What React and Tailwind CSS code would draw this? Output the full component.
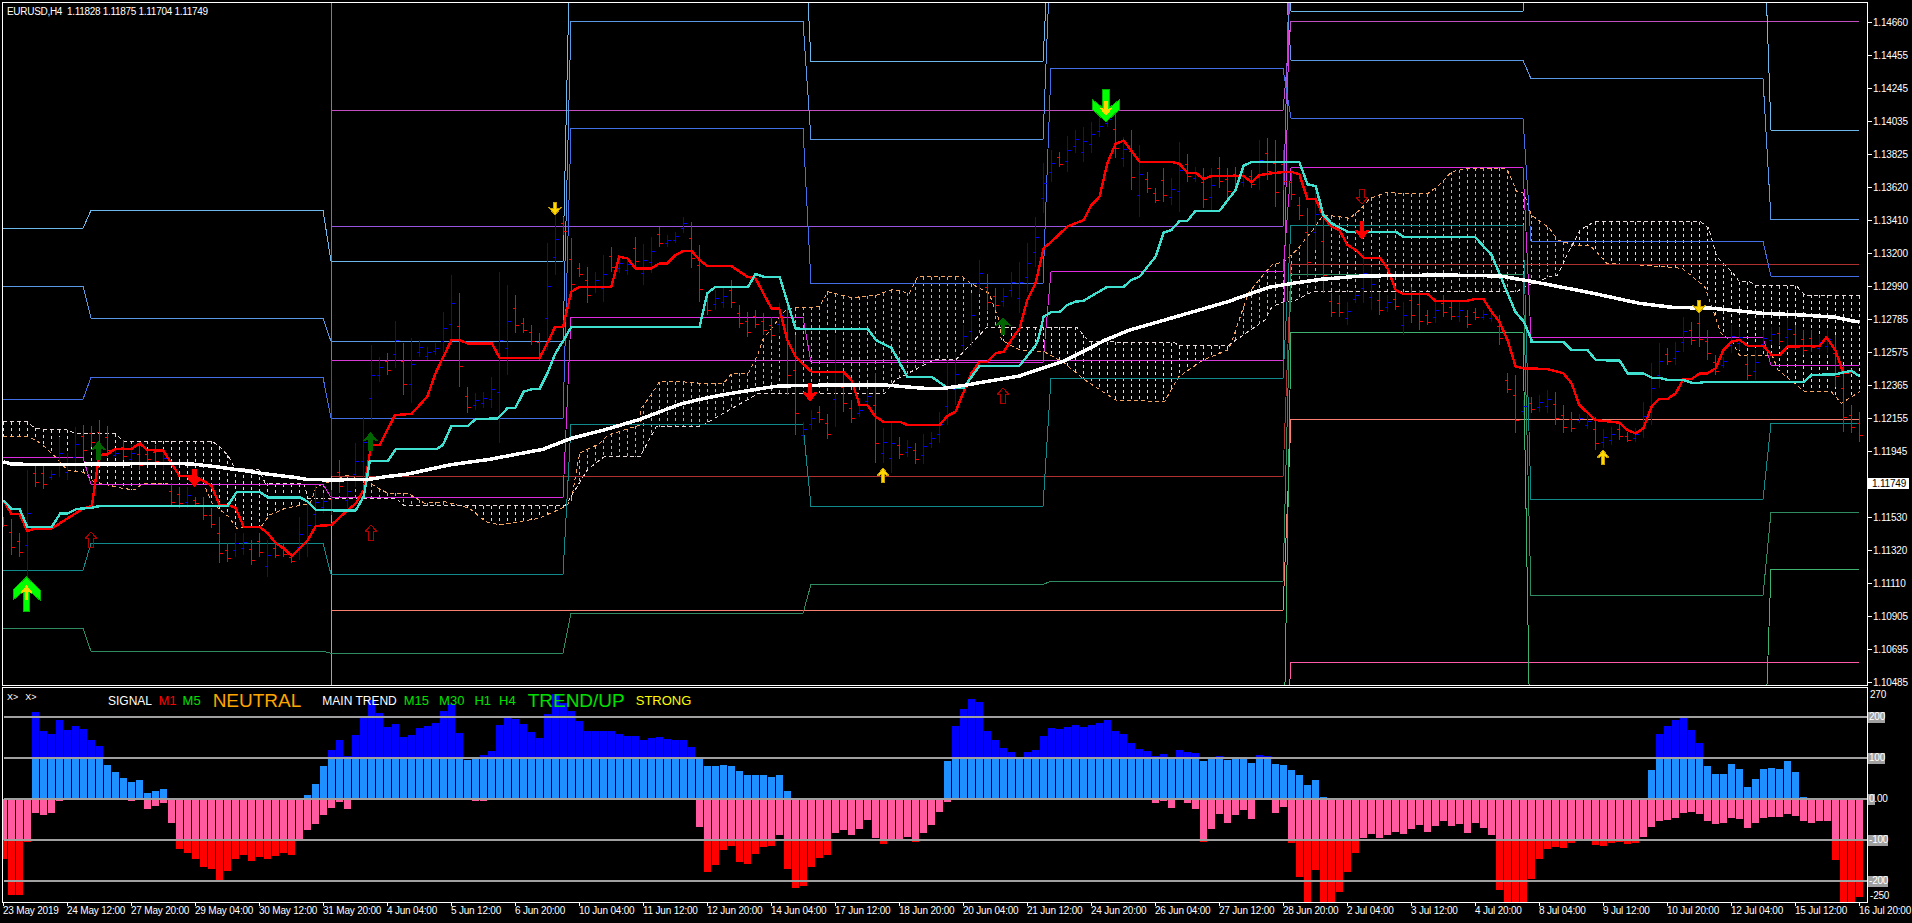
import React from "react";

// zoom crop coords -> page coords
const z = (x0, y0, a) => {
  const out = [];
  for (let i = 0; i < a.length; i += 2) out.push([x0 + a[i] / 2.45, y0 + a[i + 1] / 3]);
  return out;
};
const pts = (p) => p.map((q) => q[0].toFixed(1) + "," + q[1].toFixed(1)).join(" ");

const interp = (p, x) => {
  if (x <= p[0][0]) return p[0][1];
  for (let i = 1; i < p.length; i++) {
    if (x <= p[i][0]) {
      const t = (x - p[i - 1][0]) / (p[i][0] - p[i - 1][0] || 1);
      return p[i - 1][1] + t * (p[i][1] - p[i - 1][1]);
    }
  }
  return p[p.length - 1][1];
};

const RED = [
  ...z(0, 340, [8,480,28,522,48,522,67,573,87,565,127,565,205,505,225,498,233,430,243,345,263,343,283,327,322,327,342,310,361,330,400,332,420,370,440,408,480,410,518,437,538,495,558,495,577,503,597,560,636,560,656,580,676,610,695,625,715,648,754,600,774,558,812,555,852,510,872,490,891,450,906,340,910,315,930,315,968,225,1008,222,1047,170,1067,100,1106,0,1126,0,1145,10,1205,10,1224,53,1322,53,1345,0]),
  ...z(0, 0, [1360,980,1380,980,1385,950,1400,875,1420,860,1498,860,1517,770,1537,775,1557,805]),
  ...z(640, 0, [0,805,28,805,48,790,67,790,87,765,107,752,126,752,146,780,165,798,224,798,244,815,263,830,283,835,322,925,341,925,361,1020]),
  ...z(640, 340, [381,50,420,95,498,95,518,120,538,195,557,195,577,230,596,245,636,245,655,255,734,255,753,228,773,215,812,100,832,65,851,65,871,40,891,35,910,0]),
  ...z(640, 0, [930,985,949,900,969,850,989,745,1008,725,1047,680,1087,660,1106,615,1126,590,1145,490,1165,432,1185,422,1224,485,1302,485,1322,492,1341,518,1361,518,1381,537,1400,528,1479,528,1498,547,1518,525,1548,520]),
  ...z(1272, 0, [28,516,48,516,67,522,87,597,107,597,126,650,146,680,165,690,185,735,205,750,224,773,264,773,283,805,303,870,322,882,381,882,400,902,479,902,498,897,518,897,538,935,557,965,577,1020]),
  ...z(1272, 340, [597,80,617,85,675,87,714,100,734,130,753,195,792,240,851,248,871,270,891,280,910,265,930,200,949,177,969,177,989,160,1008,117,1028,117,1048,100,1067,100,1087,85,1106,30,1126,5,1146,0,1165,17,1204,17,1224,45,1244,45,1263,20,1342,17,1358,-8,1380,30,1400,100,1420,95,1438,105]),
];

const CYAN = [
  ...z(0, 340, [8,480,28,507,48,507,67,560,127,560,148,520,167,520,187,507,225,503,245,498,558,497,580,456,636,456,656,472,735,472,754,485,774,510,871,512,891,470,906,363,950,363,970,327,1070,327,1085,315,1106,258,1146,258,1165,238,1220,235,1243,205,1263,203,1283,155,1302,148,1322,146,1341,100,1361,40,1381,0]),
  ...z(0, 0, [1400,980,1568,980]),
  ...z(640, 0, [146,980,165,880,185,860,265,860,283,822,303,830,342,830,381,985,400,987,558,987,578,1020]),
  ...z(640, 340, [617,25,655,110,714,110,753,143,793,143,832,77,930,77,970,15,975,0]),
  ...z(640, 0, [989,950,1008,936,1028,936,1047,915,1067,905,1087,902,1145,860,1185,860,1204,840,1224,830,1263,770,1283,698,1302,690,1322,663,1341,663,1361,632,1420,632,1459,570,1479,497,1498,486,1548,486]),
  ...z(1272, 0, [67,486,87,553,107,558,126,645,146,670,185,695,303,695,322,710,498,712,538,765,596,935,617,965,636,1020]),
  ...z(1272, 340, [636,5,714,5,734,30,773,30,793,60,852,62,871,100,910,100,930,113,949,113,969,120,1008,120,1028,128,1048,128,1067,125,1304,125,1322,105,1380,103,1420,92,1438,108]),
];

const WHITE = [
  ...z(0, 340, [8,365,28,372,108,374,420,370,470,372,515,378,600,392,640,400,720,412,750,418,810,420,905,418,945,410,1000,402,1100,375,1200,358,1330,328,1400,295,1480,270,1568,238]),
  ...z(640, 340, [60,210,100,192,140,180,200,165,300,145,340,138,470,135,600,135,665,142,710,146,745,145,800,135,860,122,930,108,960,95,1040,62,1080,38,1140,0]),
  ...z(640, 0, [1200,990,1300,955,1440,905,1540,862]),
  ...z(1272, 0, [50,850,120,838,220,828,420,825,560,828,640,845,780,878,900,910,980,922,1080,925,1200,940,1300,945,1380,952,1438,966]),
];

const SPAN_A = [
  ...z(0, 340, [8,290,70,290,100,310,135,350,165,390,205,397,230,425,300,445,330,450,350,430,500,435,520,490,560,530,580,565,640,560,660,525,700,505,760,490,775,440,850,405,895,420,920,440,950,460,1000,460,1040,490,1090,485,1150,505,1190,545,1225,555,1320,535,1385,500,1400,480,1420,340,1470,310,1490,285,1568,255]),
  ...z(640, 340, [0,210,30,160,47,125,100,125,150,130,205,130,225,100,265,100,290,40]),
  ...z(640, 0, [300,1020,360,925,440,920,460,875,520,893,580,885,620,868,660,880,680,830,790,830,810,850,855,880,880,960,885,1020]),
  ...z(640, 340, [930,30,990,35,1040,70,1090,120,1165,180,1285,185,1320,110,1380,60,1440,30,1450,5]),
  ...z(640, 0, [1490,880,1530,820]),
  ...z(1272, 0, [0,795,30,785,60,750,100,690,125,645,165,650,190,655,215,630,240,595,280,578,320,580,380,582,410,555,440,515,480,505,575,505,600,575,618,580,635,645,680,685,700,720,740,735,780,738,795,755,820,790,900,795,1005,805,1060,860,1100,1000]),
  ...z(1272, 340, [1130,10,1145,45,1225,45,1240,90,1305,155,1370,155,1395,190,1440,155]),
];

const SPAN_B = [
  ...z(0, 340, [8,245,68,245,85,265,105,268,165,270,185,280,285,282,300,303,520,303,545,328,560,350,575,385,635,390,650,430,745,432,755,475,970,475,990,497,1385,497,1440,388,1480,350,1568,350]),
  ...z(640, 340, [40,260,150,258,290,160,600,160,625,120,720,60,775,58]),
  ...z(640, 0, [850,982,1070,982,1090,1010]),
  ...z(640, 340, [1100,5,1310,8,1320,17,1440,17]),
  [1265, 320],
  ...z(1272, 0, [0,920,30,905,50,905,100,875,600,875,618,860,680,830,700,825,725,760,755,690,790,665,1050,665,1070,685,1090,770,1130,820,1145,845,1170,845,1185,855,1285,858,1305,885,1440,888]),
];

// weekly pivot steps
const SEGS = [[3,83],[91,323],[331,563],[571,803],[811,1043],[1051,1283],[1291,1523],[1531,1763],[1771,1859]];
const WEEKLY = [
  { c: "#6cb8ea", y: [228.3,210.3,261.3,-100,61.3,-100,11.3,-100,130.3] },
  { c: "#5b9ae2", y: [286.3,318.3,341.3,21.3,139.3,-60,60.3,78.7,219.3] },
  { c: "#4270e4", y: [399.3,377.3,418.3,128.3,283.3,68.3,118.3,241.3,276.3] },
  { c: "#e02ce0", y: [457.3,484.3,497.3,317.3,362.3,271.7,167.7,337.3,365] },
  { c: "#108a8a", y: [570.3,543.3,574.3,424.7,506.3,378.3,225.3,499.3,423.3] },
  { c: "#2e8b62", y: [628.3,651.3,653.3,613.3,584.3,581.3,274.3,595.3,512.3] },
  { c: "#3cb371", y: [800,800,800,800,800,800,332.3,800,569.3] },
];
// longer monthly levels
const MONTHLY = [
  { c: "#c050c0", p: [[331,-100],[331,110.3],[1283,110.3],[1291,21.3],[1859,21.3]] },
  { c: "#9a55e0", p: [[331,110.3],[331,226.3],[1283,226.3],[1291,-100]] },
  { c: "#d83cd8", p: [[331,226.3],[331,360.3],[1283,360.3],[1291,-100]] },
  { c: "#b03030", p: [[331,360.3],[331,476.3],[1283,476.3],[1291,264.3],[1859,264.3]] },
  { c: "#fa8072", p: [[331,476.3],[331,800],[331,610.3],[1283,610.3],[1291,419.3],[1859,419.3]] },
  { c: "#ff5aa8", p: [[1283,800],[1291,662.3],[1859,662.3]] },
];

// [red, high, low] one per H4 bar, 8px apart
const BARS = [
  [1,517,527],[1,519,555],[1,533,557],[0,470,577],[1,465,487],[1,465,489],[0,470,480],[0,437,477],[0,453,480],[0,427,470],
  [1,425,457],[1,426,447],[1,420,453],[1,426,457],[0,450,457],[1,440,460],[0,445,465],[1,445,470],[1,450,462],[1,445,465],
  [0,450,470],[1,483,507],[1,487,508],[0,487,508],[1,497,505],[1,497,520],[1,508,528],[1,517,563],[1,543,562],[0,533,557],
  [0,533,555],[1,540,565],[1,533,557],[0,540,577],[1,543,558],[1,543,557],[1,553,563],[0,517,560],[0,503,557],[0,485,527],
  [0,493,513],[1,490,515],[1,460,493],[0,480,508],[0,443,487],[0,417,480],[0,345,420],[0,357,382],[1,353,375],[0,321,368],
  [1,343,395],[0,338,403],[0,340,357],[0,347,360],[0,343,355],[0,312,353],[0,275,345],[1,293,387],[1,387,413],[0,393,410],
  [0,392,408],[0,377,408],[0,272,443],[0,285,375],[1,295,333],[1,318,333],[1,325,345],[1,333,360],[0,243,350],[0,215,275],
  [1,217,235],[1,238,297],[1,263,277],[1,267,303],[0,272,293],[0,255,302],[1,247,272],[0,257,273],[0,257,275],[1,237,268],
  [0,244,285],[0,237,273],[1,227,247],[0,235,247],[0,232,243],[0,217,233],[1,222,268],[1,245,302],[1,293,315],[0,290,310],
  [0,288,308],[1,280,308],[1,305,328],[1,312,337],[1,310,328],[1,313,335],[1,317,340],[0,303,333],[1,305,395],[1,335,435],
  [0,422,440],[0,410,430],[1,406,423],[1,414,439],[0,335,427],[1,373,412],[1,400,423],[0,405,417],[0,390,405],[1,373,463],
  [0,428,463],[0,423,473],[1,437,459],[0,440,457],[1,443,464],[0,434,464],[0,432,448],[0,412,443],[0,360,425],[0,353,405],
  [0,325,353],[0,293,347],[0,260,293],[1,274,310],[1,288,310],[0,288,307],[0,272,297],[0,262,313],[0,243,292],[0,217,267],
  [0,163,213],[0,150,182],[1,152,167],[0,136,172],[0,130,153],[0,127,162],[0,122,153],[0,118,137],[0,113,127],[1,113,158],
  [0,137,167],[1,130,190],[0,145,217],[1,172,193],[1,188,203],[1,168,202],[0,178,205],[0,142,212],[1,154,182],[0,167,182],
  [1,168,208],[0,168,210],[1,157,188],[1,168,198],[1,167,187],[0,170,187],[1,170,188],[0,140,190],[1,138,180],[1,140,207],
  [1,150,190],[1,173,200],[1,197,220],[1,208,277],[0,190,250],[1,213,293],[1,293,317],[1,295,317],[0,302,325],[0,290,303],
  [0,253,303],[0,267,310],[1,292,315],[0,295,312],[1,293,310],[0,302,335],[1,287,323],[1,290,330],[1,310,325],[0,302,323],
  [1,295,317],[1,300,320],[0,302,322],[1,310,328],[1,308,320],[0,310,320],[0,308,322],[1,315,345],[1,373,393],[1,375,433],
  [0,400,415],[1,397,413],[0,395,412],[0,390,413],[1,392,425],[1,405,433],[1,412,432],[0,414,423],[0,415,429],[1,417,450],
  [0,429,448],[0,427,445],[1,423,440],[1,432,442],[0,428,442],[0,402,438],[0,363,425],[0,343,388],[1,348,365],[0,342,365],
  [0,317,352],[1,322,345],[1,310,347],[1,330,360],[1,355,375],[0,357,368],[0,325,353],[0,328,350],[1,355,380],[0,350,380],
  [0,330,350],[0,327,345],[1,327,345],[0,318,345],[1,325,350],[1,330,355],[1,330,352],[0,335,353],[0,330,353],[1,335,387],
  [1,365,432],[1,405,433],[1,412,442],
];

const rep = (n) => Array(n).fill(357);
const TOPS = [
  ...rep(4),96,153,162,120,150,138,147,180,198,255,276,294,306,300,339,333,327,
  ...rep(17),345,312,258,210,180,228,165,111,60,99,141,132,171,165,144,138,129,93,72,159,240,234,225,213,135,114,117,132,156,174,102,42,69,93,123,153,153,153,153,162,168,168,
  180,174,171,177,180,180,201,237,258,258,255,258,273,285,285,285,291,285,333,
  ...rep(19),243,138,87,57,66,153,180,204,216,237,216,210,168,144,147,141,135,141,135,129,120,153,162,189,207,213,228,222,237,210,216,219,243,234,228,240,234,234,249,225,228,252,
  255,270,285,315,300,351,
  ...rep(40),270,162,138,120,114,150,189,258,282,282,252,267,321,297,267,264,267,243,276,351,
  ...rep(7),
];
const BOTS = [
  537,645,645,485,399,405,399,363,...rep(8),363,357,387,378,369,
  429,507,519,537,561,567,600,573,537,525,543,531,537,528,519,525,480,
  450,432,405,384,366,387,...rep(15),363,363,...rep(26),
  441,576,555,510,498,546,552,522,501,498,465,567,
  624,618,561,534,525,459,450,465,447,420,474,492,477,477,471,486,459,435,396,
  366,...rep(25),369,363,384,357,369,387,486,447,402,429,405,390,417,357,357,
  399,381,489,591,666,570,666,666,636,576,519,474,462,474,465,456,462,447,435,456,438,423,438,432,459,429,444,465,
  630,666,666,666,597,537,507,501,504,489,480,480,495,498,489,486,492,489,471,
  441,423,420,414,399,396,402,423,432,429,414,417,444,429,414,411,411,402,408,423,
  429,423,423,540,666,666,651,
];

const PRICES = ["1.14660","1.14455","1.14245","1.14035","1.13825","1.13620","1.13410","1.13200","1.12990","1.12785","1.12575","1.12365","1.12155","1.11945",null,"1.11530","1.11320","1.11110","1.10905","1.10695","1.10485"];
const DATES = ["23 May 2019","24 May 12:00","27 May 20:00","29 May 04:00","30 May 12:00","31 May 20:00","4 Jun 04:00","5 Jun 12:00","6 Jun 20:00","10 Jun 04:00","11 Jun 12:00","12 Jun 20:00","14 Jun 04:00","17 Jun 12:00","18 Jun 20:00","20 Jun 04:00","21 Jun 12:00","24 Jun 20:00","26 Jun 04:00","27 Jun 12:00","28 Jun 20:00","2 Jul 04:00","3 Jul 12:00","4 Jul 20:00","8 Jul 04:00","9 Jul 12:00","10 Jul 20:00","12 Jul 04:00","15 Jul 12:00","16 Jul 20:00"];

const WIDE = [[0,0],[1,.38],[1,.68],[.25,.43],[.25,1],[-.25,1],[-.25,.43],[-1,.68],[-1,.38]];
const HEAD = [[0,0],[1,.55],[.3,.48],[.3,1],[-.3,1],[-.3,.48],[-1,.55]];
const BLOCK = [[0,0],[1,.5],[.3,.42],[.3,1],[-.3,1],[-.3,.42],[-1,.5]];
const HOLLOW = [[0,0],[1,.45],[.45,.45],[.45,1],[-.45,1],[-.45,.45],[-1,.45]];

const Arrow = ({ x, top, h, w, shape = HEAD, down, fill, stroke }) => (
  <polygon
    points={shape.map(([a, b]) => `${x + a * w},${down ? top + h - b * h : top + b * h}`).join(" ")}
    fill={fill || "none"}
    stroke={stroke || "none"}
  />
);

const PriceChart = () => {
  const blue = [];
  const red = [];
  BARS.forEach(([isRed, hi, lo], i) => {
    const x = 8 * i + 3.5;
    const span = lo - hi;
    const o = isRed ? hi + span * 0.35 : lo - span * 0.3;
    const c = isRed ? lo - span * 0.22 : hi + span * 0.4;
    const d = `M${x} ${hi}V${lo}M${x - 3} ${o.toFixed(0)}H${x}M${x} ${c.toFixed(0)}H${x + 3}`;
    (isRed ? red : blue).push(d);
  });

  let sandy = "";
  let pale = "";
  for (let i = 0; i < 233; i++) {
    const x = 8 * i + 3.5;
    const a = interp(SPAN_A, x);
    const b = interp(SPAN_B, x);
    const d = `M${x} ${Math.min(a, b).toFixed(0)}V${Math.max(a, b).toFixed(0)}`;
    if (a < b) sandy += d;
    else pale += d;
  }

  return (
    <svg className="block w-[1864px] h-[682px]" viewBox="3 3 1864 682" shapeRendering="crispEdges" fill="none">
      <path d={sandy} stroke="#f4a460" strokeDasharray="3 3" />
      <path d={pale} stroke="#e8d8d8" strokeDasharray="3 3" />
      <polyline points={pts(SPAN_A)} stroke="#f4a460" strokeDasharray="4 3" />
      <polyline points={pts(SPAN_B)} stroke="#e8d8d8" strokeDasharray="4 3" />

      {MONTHLY.map((l, n) => (
        <polyline key={n} points={pts(l.p)} stroke={l.c} />
      ))}
      {WEEKLY.map((l, n) => (
        <polyline key={n} points={pts(l.y.flatMap((y, i) => [[SEGS[i][0], y], [SEGS[i][1], y]]))} stroke={l.c} />
      ))}

      <path d={blue.join("")} stroke="#0000ff" />
      <path d={red.join("")} stroke="#ff0000" />

      <polyline points={pts(RED)} stroke="#ff0000" strokeWidth="2.4" />
      <polyline points={pts(CYAN)} stroke="#40e0d0" strokeWidth="2.4" />
      <polyline points={pts(WHITE)} stroke="#ffffff" strokeWidth="3.5" />

      {/* big green arrows */}
      <Arrow x={26.5} top={577} h={34} w={13.5} shape={WIDE} fill="#00ff00" stroke="#00b400" />
      <Arrow x={26.5} top={585} h={15} w={6.5} fill="#ffd700" />
      <Arrow x={1106} top={89} h={33} w={13.5} shape={WIDE} down fill="#00ff00" stroke="#00b400" />
      <Arrow x={1106} top={101} h={15} w={6.5} down fill="#ffd700" />

      {/* yellow */}
      <Arrow x={555} top={202} h={13} w={6} down fill="#ffd700" stroke="#c8a000" />
      <Arrow x={883} top={468} h={14} w={6} fill="#ffd700" stroke="#c8a000" />
      <Arrow x={1699} top={300} h={13} w={6} down fill="#ffd700" stroke="#c8a000" />
      <Arrow x={1603} top={450} h={14} w={6} fill="#ffd700" stroke="#c8a000" />

      {/* dark green */}
      <Arrow x={98.5} top={441} h={19} w={8} shape={BLOCK} fill="#006400" />
      <Arrow x={370.5} top={432} h={19} w={8} shape={BLOCK} fill="#006400" />
      <Arrow x={1003} top={317} h={18} w={8} shape={BLOCK} fill="#006400" />

      {/* red */}
      <Arrow x={194.5} top={469} h={18} w={8} down fill="#ff0000" />
      <Arrow x={810} top={383} h={19} w={8} down fill="#ff0000" />
      <Arrow x={1362} top={221} h={19} w={8} down fill="#ff0000" />

      <Arrow x={91} top={532} h={15} w={6} shape={HOLLOW} stroke="#b00000" />
      <Arrow x={371} top={525} h={15} w={6} shape={HOLLOW} stroke="#b00000" />
      <Arrow x={1003} top={388} h={15} w={6} shape={HOLLOW} stroke="#b00000" />
      <Arrow x={1362} top={189} h={15} w={6} shape={HOLLOW} down stroke="#b00000" />
    </svg>
  );
};

const toY = (v) => 680 + v / 3;
const Histogram = () => (
  <svg className="block w-[1864px] h-[214px]" viewBox="3 688 1864 214" shapeRendering="crispEdges">
    {TOPS.map((t, i) => {
      if (t >= 357) return null;
      return <rect key={i} x={8 * i} y={toY(t)} width="7" height={799 - toY(t)} fill="#1e90ff" />;
    })}
    {TOPS.map((t, i) => {
      if (t >= 234) return null;
      return <rect key={i} x={8 * i} y={toY(t)} width="7" height={758 - toY(t)} fill="#0000ff" />;
    })}
    {BOTS.map((b, i) => {
      if (b <= 357) return null;
      return <rect key={i} x={8 * i} y={799} width="7" height={toY(b) - 799} fill="#ff5aa0" />;
    })}
    {BOTS.map((b, i) => {
      if (b <= 480) return null;
      return <rect key={i} x={8 * i} y={840} width="7" height={toY(b) - 840} fill="#ff0000" />;
    })}
    {[717, 758, 799, 840, 881].map((y) => (
      <rect key={y} x="4" y={y - 1} width="1863" height="2" fill="#a0a0a0" />
    ))}
  </svg>
);

export default function App() {
  return (
    <div className="relative w-[1912px] h-[923px] overflow-hidden bg-black pl-[2px] pt-[2px] text-white [font-family:'Liberation_Sans',Arial,sans-serif]">
      {/* main window */}
      <div className="flex h-[684px]">
        <div className="relative w-[1865px] shrink-0 border-y border-l border-white">
          <PriceChart />
          <div className="absolute left-[4px] top-[3px] whitespace-pre text-[10px] leading-[11px] tracking-[-0.3px]">EURUSD,H4  1.11828 1.11875 1.11704 1.11749</div>
        </div>
        <div className="w-[45px] shrink-0 border-l border-white pt-[4px] text-[10px] leading-[11px] tracking-[-0.2px]">
          {PRICES.map((p, i) =>
            p ? (
              <div key={i} className="flex h-[33px] shrink-0 items-center">
                <span className="h-px w-[4px] bg-white" />
                <span className="ml-px">{p}</span>
              </div>
            ) : (
              <div key={i} className="flex h-[33px] shrink-0 items-center pb-[3px]">
                <span className="h-[11px] w-[41px] bg-white pl-[4px] text-black">1.11749</span>
              </div>
            )
          )}
        </div>
      </div>

      {/* indicator window */}
      <div className="mt-px flex h-[216px]">
        <div className="relative w-[1865px] shrink-0 border-y border-l border-white">
          <Histogram />
          <div className="absolute left-[4px] top-[4px] flex gap-[7px] text-[9px] leading-[11px]">
            <span>X&gt;</span>
            <span>X&gt;</span>
          </div>
          <div className="absolute left-[105px] top-0 flex h-[25px] items-center whitespace-nowrap text-[12px] leading-none">
            <span>SIGNAL</span>
            <span className="ml-[6.5px] text-[13px] text-[#ff0000]">M1</span>
            <span className="ml-[6px] text-[13px] text-[#00e000]">M5</span>
            <span className="ml-[12px] text-[19px] text-[#ffa500]">NEUTRAL</span>
            <span className="ml-[21px]">MAIN TREND</span>
            <span className="ml-[7px] text-[13px] text-[#00e000]">M15</span>
            <span className="ml-[10px] text-[13px] text-[#00e000]">M30</span>
            <span className="ml-[10px] text-[13px] text-[#00e000]">H1</span>
            <span className="ml-[8px] text-[13px] text-[#00e000]">H4</span>
            <span className="ml-[12px] text-[19px] text-[#00e000]">TREND/UP</span>
            <span className="ml-[11px] text-[13px] text-[#ffff00]">STRONG</span>
          </div>
        </div>
        <div className="w-[45px] shrink-0 border-l border-white text-[10px] leading-[10px] tracking-[-0.2px]">
          <div className="flex h-[15px] items-center pl-[2px]">270</div>
          <div className="mt-[5px] flex h-[20px] items-center">
            <span className="h-[11px] w-[17px] bg-[#a0a0a0] pl-px">200</span>
          </div>
          <div className="mt-[21px] flex h-[20px] items-center">
            <span className="h-[11px] w-[17px] bg-[#a0a0a0] pl-px">100</span>
          </div>
          <div className="mt-[21px] flex h-[20px] items-center">
            <span className="h-[11px] w-[7px] bg-[#a0a0a0]" />
            <span className="-ml-[6px]">0.00</span>
          </div>
          <div className="mt-[21px] flex h-[20px] items-center">
            <span className="h-[11px] w-[20px] bg-[#a0a0a0] pl-px">-100</span>
          </div>
          <div className="mt-[21px] flex h-[20px] items-center">
            <span className="h-[11px] w-[20px] bg-[#a0a0a0] pl-px">-200</span>
          </div>
          <div className="flex h-[10px] items-center pl-[2px]">-250</div>
        </div>
      </div>

      {/* time axis */}
      <div className="flex pl-px text-[10px] leading-[10px] tracking-[-0.2px]">
        {DATES.map((d) => (
          <div key={d} className="w-[64px] shrink-0">
            <div className="h-[3px] w-px bg-white" />
            <div className="whitespace-nowrap">{d}</div>
          </div>
        ))}
      </div>
    </div>
  );
}
